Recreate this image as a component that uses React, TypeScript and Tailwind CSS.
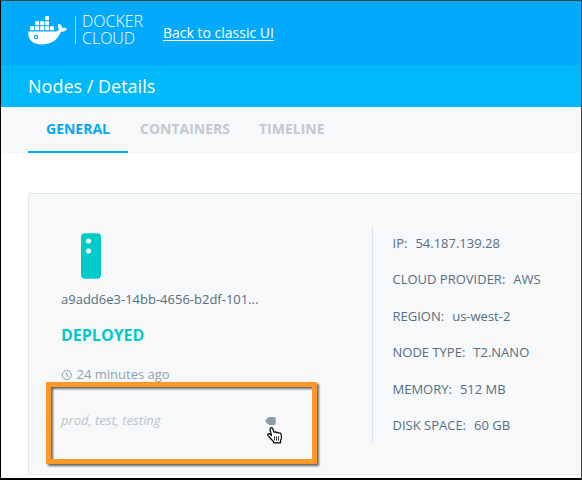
import React from "react";

function DockerWhale() {
  return (
    <svg className="block h-[29px] w-[40px] shrink-0" viewBox="0 0 40 29" fill="white" aria-hidden="true">
      <rect x="17.2" y="0.2" width="3.8" height="3.9" />
      <rect x="7.2" y="5.2" width="4" height="4" />
      <rect x="12.2" y="5.2" width="4" height="4" />
      <rect x="17.2" y="5.2" width="3.8" height="4" />
      <rect x="2.2" y="10.2" width="4" height="4" />
      <rect x="7.2" y="10.2" width="4" height="4" />
      <rect x="12.2" y="10.2" width="4" height="4" />
      <rect x="17.2" y="10.2" width="3.8" height="4" />
      <rect x="22" y="10.2" width="4" height="4" />
      <path d="M0.4 15.6H26C28.7 15.6 30.5 14.7 31.2 13.3C29.4 11.5 29.5 9.2 31 7.6C33 8.8 33.9 10.3 33.9 11.9C35.7 11.4 37.8 11.7 39 12.9C38 15 35.5 15.8 33 15.6C29.8 23.6 24 28.4 14.2 28.4C5.2 28.4-0.4 24 0.4 15.6Z" />
      <circle cx="8" cy="21" r="1.6" fill="white" stroke="#06a5f5" strokeWidth="1.2" />
    </svg>
  );
}

function ServerIcon() {
  return (
    <svg className="block h-[46px] w-[20px]" viewBox="0 0 20 46" aria-hidden="true">
      <rect x="0" y="0.3" width="20" height="45.4" rx="4" fill="#00cbca" />
      <circle cx="7.6" cy="8" r="2.5" fill="white" />
      <circle cx="7.6" cy="17.9" r="2.5" fill="white" />
    </svg>
  );
}

function ClockIcon() {
  return (
    <svg className="block h-[11px] w-[11px]" viewBox="0 0 11 11" fill="none" stroke="#8fa3ae" aria-hidden="true">
      <circle cx="5.8" cy="5" r="4.6" />
      <path d="M5.7 2.2V5.3L7.8 6.6" />
    </svg>
  );
}

function TagIcon() {
  return (
    <svg className="block h-[8px] w-[11px]" viewBox="0 0 11 8" fill="#8c9fab" aria-hidden="true">
      <path d="M0 4L2.6 0.9Q3.3 0.1 4.3 0.1H9.4Q10.7 0.1 10.7 1.4V6.6Q10.7 7.9 9.4 7.9H4.3Q3.3 7.9 2.6 7.1Z" />
    </svg>
  );
}

function HandCursor() {
  return (
    <svg className="absolute left-[266px] top-[426px] h-[17px] w-[16px]" viewBox="0 0 16 17" aria-hidden="true">
      <path
        d="M3.4 1.2Q4.6 0 5.6 1.6L7.1 5.3Q8.7 4.3 9.5 5.7Q10.9 4.9 11.7 6.2Q13.5 5.5 14.1 7.3L14.5 10.5Q14.5 12.2 13.5 13.3V15.8H6.5V14.7L4.1 12L1 8.6Q0.3 7 1.9 6.7Q2.9 6.7 4.5 8.6L3.2 3.2Q2.8 1.8 3.4 1.2Z"
        fill="white"
        stroke="black"
        strokeWidth="1.2"
        strokeLinejoin="round"
      />
      <path d="M7.5 9.3V13.5M9.5 9.3V13.5M11.5 9.3V13.5" stroke="black" strokeWidth="0.8" />
    </svg>
  );
}

const details = [
  { label: "IP:", value: "54.187.139.28" },
  { label: "CLOUD PROVIDER:", value: "AWS" },
  { label: "REGION:", value: "us-west-2" },
  { label: "NODE TYPE:", value: "T2.NANO" },
  { label: "MEMORY:", value: "512 MB" },
  { label: "DISK SPACE:", value: "60 GB" },
];

export default function App() {
  return (
    <div className="relative flex h-[480px] w-[582px] flex-col overflow-hidden border border-b-2 border-t-[#444] border-r-[#444] border-b-black border-l-black bg-white font-['Open_Sans',sans-serif] text-[#566f7e]">
      <header className="flex h-[64px] shrink-0 bg-[#03a9fa] pl-[27px] text-white">
        <div className="pt-[15px]">
          <DockerWhale />
        </div>
        <div className="mt-[15px] ml-[7px] h-[28px] w-px bg-[#9cdcff]" />
        <div className="mt-[12px] ml-[6px] w-[81px] text-[16px] leading-[17px] font-light">
          <div>DOCKER</div>
          <div>CLOUD</div>
        </div>
        <a className="mt-[22px] h-[20px] text-[14px] leading-[20px] whitespace-nowrap underline underline-offset-2" href="#classic">
          Back to classic UI
        </a>
      </header>
      <div className="flex h-[42px] shrink-0 items-center bg-[#01b9fa] pl-[27px] text-[18px] text-white">Nodes / Details</div>
      <nav className="flex h-[46px] shrink-0 bg-[#f6f8fa] pl-[27px] text-[14px] leading-[44px] font-bold text-[#c0cacf]">
        <div className="w-[100px] border-b-2 border-[#03a9f4] pl-[18px] text-[#03a9f4]">GENERAL</div>
        <div className="w-[119px] pl-[12px]">CONTAINERS</div>
        <div className="pl-[12px]">TIMELINE</div>
      </nav>
      <main className="flex-1 pt-[40px] pl-[27px]">
        <section className="flex h-[282px] w-[570px] rounded-[3px] border border-[#dfe6ea] bg-[#f7f8fa] pt-[32px] pl-[32px]">
          <div className="flex w-[311px] flex-col">
            <div className="mt-[7px] ml-[20px]">
              <ServerIcon />
            </div>
            <div className="mt-[10px] h-[20px] text-[13px] leading-[20px]">a9add6e3-14bb-4656-b2df-101...</div>
            <div className="mt-[14px] h-[24px] text-[16px] leading-[24px] font-bold text-[#00cbca]">DEPLOYED</div>
            <div className="mt-[18px] flex h-[20px] items-center gap-[4.5px] text-[13px] text-[#8fa3ae]">
              <ClockIcon />
              <span>24 minutes ago</span>
            </div>
            <div className="mt-[26px] flex h-[20px] items-center text-[13px] text-[#b9c4ca]">
              <span className="w-[204px] italic">prod, test, testing</span>
              <TagIcon />
            </div>
          </div>
          <dl className="flex h-[216px] flex-col gap-[16.4px] border-l border-[#dce2e6] pt-[7px] pl-[19.5px] text-[13px] leading-[20px]">
            {details.map((item) => (
              <div key={item.label} className="flex gap-[8px] whitespace-nowrap">
                <dt>{item.label}</dt>
                <dd>{item.value}</dd>
              </div>
            ))}
          </dl>
        </section>
      </main>
      <div className="absolute top-[381px] left-[45px] h-[82px] w-[271px] border-[5px] border-[#ff982a] drop-shadow-[2.5px_2.5px_0.8px_rgba(0,0,0,0.6)]" />
      <HandCursor />
    </div>
  );
}
